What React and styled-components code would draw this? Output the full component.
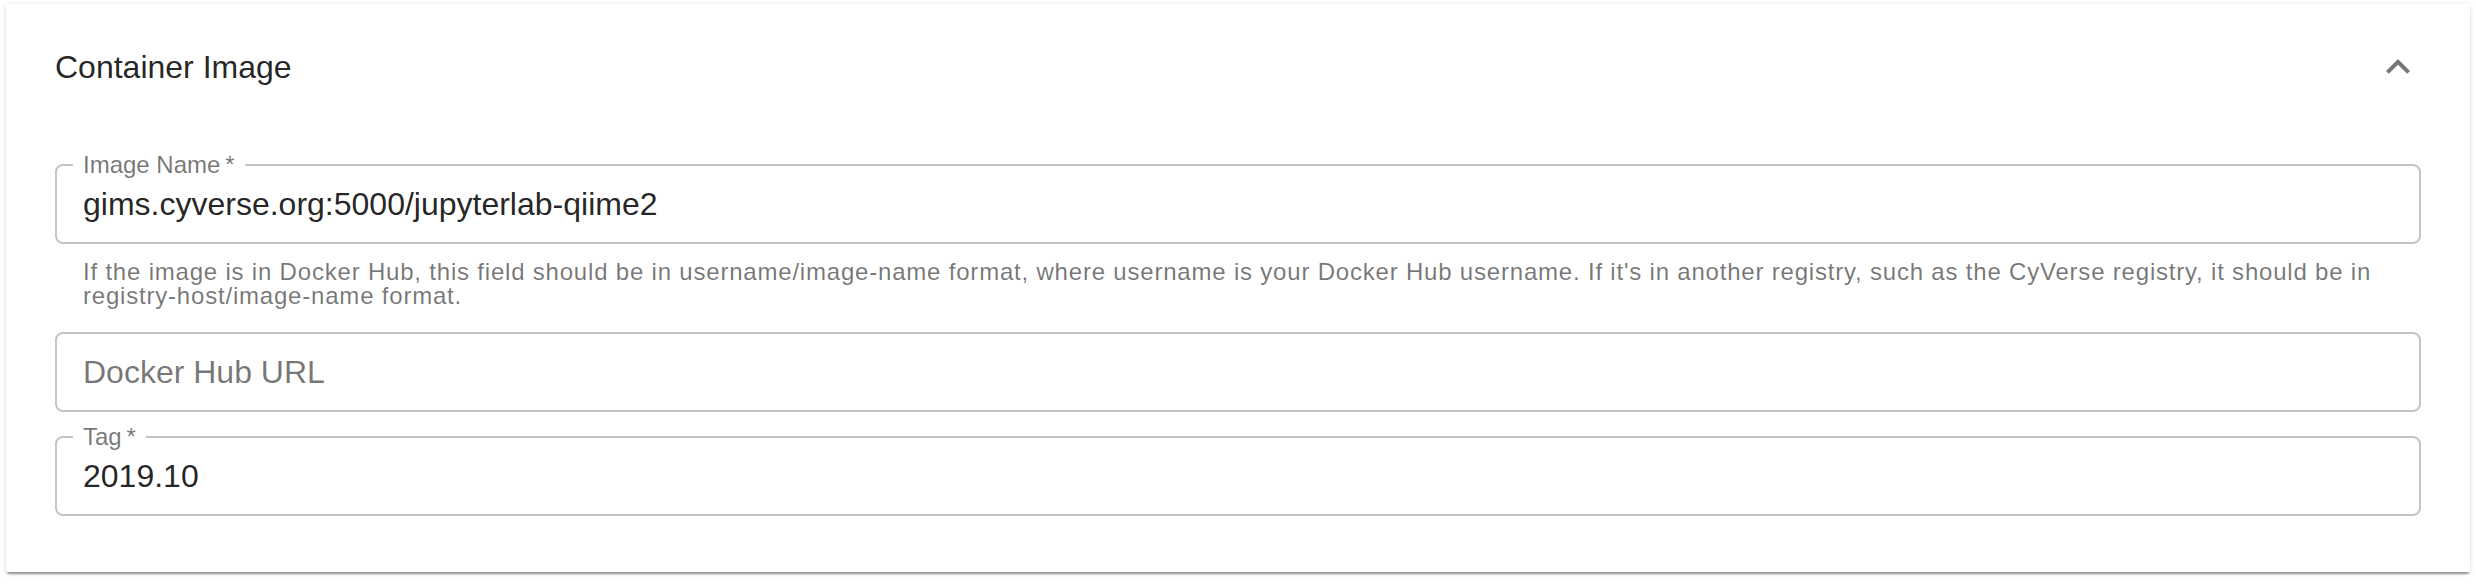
import React from 'react';
import styled, { createGlobalStyle } from 'styled-components';

const GlobalStyle = createGlobalStyle`
  html, body {
    margin: 0;
    padding: 0;
    background: #ffffff;
  }
  body {
    font-family: "Liberation Sans", Arial, Helvetica, sans-serif;
  }
`;

const Page = styled.div`
  padding: 4px 6px 12px 6px;
`;

const Card = styled.section`
  background: #ffffff;
  border-radius: 2px;
  box-shadow: 0px 4px 2px -2px rgba(0, 0, 0, 0.28),
    0px 2px 2px 0px rgba(0, 0, 0, 0.16), 0px 1px 6px 0px rgba(0, 0, 0, 0.1);
  padding: 0 49px 56px 49px;
`;

const Summary = styled.div`
  height: 126px;
  display: flex;
  align-items: center;
  justify-content: space-between;
`;

const Title = styled.h2`
  margin: 0;
  font-size: 32px;
  line-height: 40px;
  font-weight: 400;
  color: rgba(0, 0, 0, 0.87);
`;

const ExpandButton = styled.button`
  width: 48px;
  height: 48px;
  padding: 0;
  margin-right: -1px;
  border: 0;
  background: transparent;
  display: flex;
  align-items: center;
  justify-content: center;
  color: rgba(0, 0, 0, 0.54);
  cursor: pointer;
`;

const Details = styled.div`
  padding-top: 34px;
  display: flex;
  flex-direction: column;
`;

const Field = styled.div`
  display: flex;
  flex-direction: column;
  margin-bottom: ${(p) => (p.$gap !== undefined ? p.$gap : 24)}px;
`;

const Box = styled.div`
  position: relative;
  box-sizing: border-box;
  height: 80px;
  border: 2px solid #c4c4c4;
  border-radius: 8px;
  padding: 0 26px;
  display: flex;
  align-items: center;
`;

const FloatingLabel = styled.label`
  position: absolute;
  left: 16px;
  top: -13px;
  padding: 0 10px;
  background: #ffffff;
  font-size: 24px;
  line-height: 24px;
  color: rgba(0, 0, 0, 0.54);
  white-space: nowrap;
`;

const Value = styled.span`
  font-size: 32px;
  line-height: 40px;
  color: ${(p) => (p.$placeholder ? 'rgba(0, 0, 0, 0.54)' : 'rgba(0, 0, 0, 0.87)')};
`;

const Helper = styled.p`
  margin: 16px 28px 0 28px;
  font-size: 24px;
  line-height: 24px;
  letter-spacing: 0.8px;
  color: rgba(0, 0, 0, 0.54);
`;

const ChevronUp = () => (
  <svg width="48" height="48" viewBox="0 0 24 24" fill="currentColor">
    <path d="M12 8l-6 6 1.41 1.41L12 10.83l4.59 4.58L18 14z" />
  </svg>
);

const TextField = ({ label, value, placeholder, helper, gap }) => (
  <Field $gap={gap}>
    <Box>
      {label && (
        <FloatingLabel>
          {label}
          {'\u2009*'}
        </FloatingLabel>
      )}
      {value ? <Value>{value}</Value> : <Value $placeholder>{placeholder}</Value>}
    </Box>
    {helper && <Helper>{helper}</Helper>}
  </Field>
);

const App = () => {
  return (
    <Page>
      <GlobalStyle />
      <Card>
        <Summary>
          <Title>Container Image</Title>
          <ExpandButton aria-label="collapse">
            <ChevronUp />
          </ExpandButton>
        </Summary>
        <Details>
          <TextField
            label="Image Name"
            value="gims.cyverse.org:5000/jupyterlab-qiime2"
            helper="If the image is in Docker Hub, this field should be in username/image-name format, where username is your Docker Hub username. If it's in another registry, such as the CyVerse registry, it should be in registry-host/image-name format."
          />
          <TextField placeholder="Docker Hub URL" />
          <TextField label="Tag" value="2019.10" gap={0} />
        </Details>
      </Card>
    </Page>
  );
};

export default App;
